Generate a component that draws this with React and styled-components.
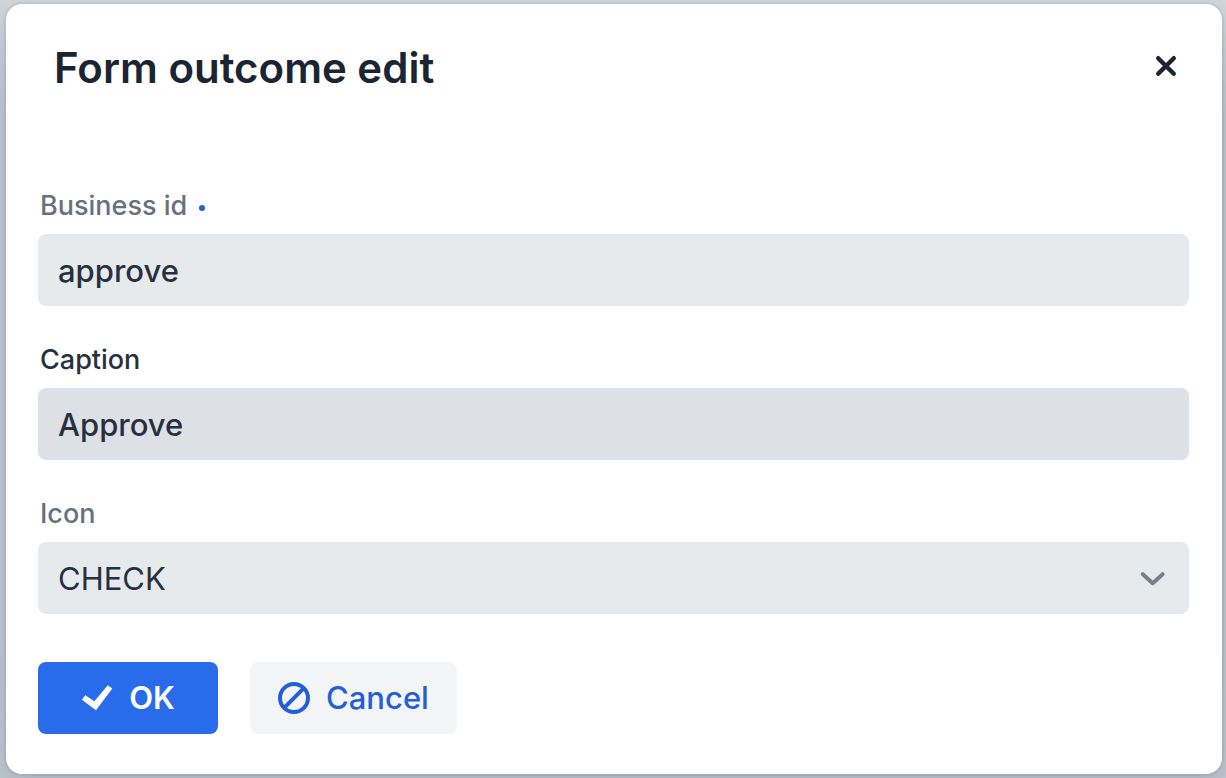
import React from 'react';
import styled, { createGlobalStyle } from 'styled-components';

const GlobalStyle = createGlobalStyle`
  *, *::before, *::after { box-sizing: border-box; }
  html { height: 100%; }
  body {
    margin: 0;
    min-height: 100%;
    font-family: Inter, "Liberation Sans", sans-serif;
    color: #27303f;
    background: linear-gradient(#d3d7dc, #c0c7d3 14%, #c0c7d3 82%, #bfc6ce);
  }
`;

const Page = styled.div`
  padding: 4px 4px 4px 6px;
`;

const Dialog = styled.section`
  background: #fff;
  border-radius: 16px;
  box-shadow: 0 0 0 2px rgba(26, 57, 96, 0.06), 0 8px 24px rgba(19, 43, 76, 0.15);
  padding: 32px 33px 40px 32px;
`;

const Header = styled.header`
  display: flex;
  align-items: center;
  justify-content: space-between;
  padding: 0 0 0 16px;
  margin-bottom: 88px;
`;

const Title = styled.h1`
  margin: 0;
  font-size: 42px;
  line-height: 64px;
  font-weight: 600;
  color: #1a2433;
`;

const CloseButton = styled.button`
  display: flex;
  align-items: center;
  justify-content: center;
  width: 46px;
  height: 46px;
  margin-bottom: 4px;
  padding: 0;
  border: 0;
  background: none;
  color: #1a2433;
  cursor: pointer;
`;

const Form = styled.form`
  display: flex;
  flex-direction: column;
  gap: 36px;
`;

const Field = styled.div`
  display: flex;
  flex-direction: column;
  gap: 10px;
`;

const Label = styled.label`
  display: flex;
  align-items: center;
  gap: 12px;
  padding-left: 2px;
  font-size: 27px;
  line-height: 36px;
  font-weight: 500;
  color: ${({ $active }) => ($active ? '#27303f' : '#67717f')};
`;

const RequiredDot = styled.span`
  width: 6px;
  height: 6px;
  margin-top: 4px;
  border-radius: 50%;
  background: #2360d8;
`;

const Input = styled.input`
  width: 100%;
  height: 72px;
  padding: 0 20px;
  border: 0;
  border-radius: 8px;
  outline: none;
  font: inherit;
  font-size: 31px;
  font-weight: 500;
  color: #27303f;
  background: ${({ $active }) => ($active ? '#dde0e5' : '#e7eaed')};
`;

const SelectBox = styled.div`
  position: relative;
`;

const Select = styled(Input).attrs({ as: 'select' })`
  display: block;
  appearance: none;
  font-weight: 400;
`;

const Chevron = styled.svg`
  position: absolute;
  right: 20px;
  top: 20px;
  pointer-events: none;
`;

const Actions = styled.div`
  display: flex;
  gap: 32px;
  padding-top: 12px;
`;

const Button = styled.button`
  display: flex;
  align-items: center;
  justify-content: center;
  gap: 16px;
  min-width: 180px;
  height: 72px;
  padding: 0 28px;
  border: 0;
  border-radius: 8px;
  font: inherit;
  font-size: 31px;
  line-height: 40px;
  font-weight: ${({ $primary }) => ($primary ? 600 : 500)};
  color: ${({ $primary }) => ($primary ? '#fff' : '#2360d8')};
  background: ${({ $primary }) => ($primary ? '#286ceb' : '#f3f5f7')};
  cursor: pointer;
`;

export default function App() {
  return (
    <>
      <GlobalStyle />
      <Page>
        <Dialog role="dialog" aria-labelledby="dialog-title">
          <Header>
            <Title id="dialog-title">Form outcome edit</Title>
            <CloseButton type="button" aria-label="Close">
              <svg width="24" height="24" viewBox="0 0 24 24" fill="none" stroke="currentColor" strokeWidth="4.4" strokeLinecap="round">
                <path d="M4.2 4.2L19.8 19.8M19.8 4.2L4.2 19.8" />
              </svg>
            </CloseButton>
          </Header>
          <Form onSubmit={(e) => e.preventDefault()}>
            <Field>
              <Label htmlFor="business-id">
                Business id
                <RequiredDot />
              </Label>
              <Input id="business-id" type="text" defaultValue="approve" required />
            </Field>
            <Field>
              <Label htmlFor="caption" $active>Caption</Label>
              <Input id="caption" type="text" defaultValue="Approve" $active />
            </Field>
            <Field>
              <Label htmlFor="icon">Icon</Label>
              <SelectBox>
                <Select id="icon" defaultValue="CHECK">
                  <option>CHECK</option>
                </Select>
                <Chevron width="32" height="32" viewBox="0 0 32 32" fill="none" stroke="#757f90" strokeWidth="4" strokeLinecap="round" strokeLinejoin="round">
                  <path d="M5.8 12.2L15.7 21.2L25.6 12.2" />
                </Chevron>
              </SelectBox>
            </Field>
            <Actions>
              <Button type="submit" $primary>
                <svg width="32" height="32" viewBox="0 0 32 32" fill="currentColor">
                  <path d="M0.8 17.8L4.3 13.2L13.3 19.3L26.8 3.2L31.3 6.6L15 28.3Z" />
                </svg>
                OK
              </Button>
              <Button type="button">
                <svg width="32" height="32" viewBox="0 0 32 32" fill="none" stroke="currentColor" strokeWidth="4">
                  <circle cx="16" cy="16" r="14" />
                  <path d="M6.2 25.8L25.8 6.2" />
                </svg>
                Cancel
              </Button>
            </Actions>
          </Form>
        </Dialog>
      </Page>
    </>
  );
}
